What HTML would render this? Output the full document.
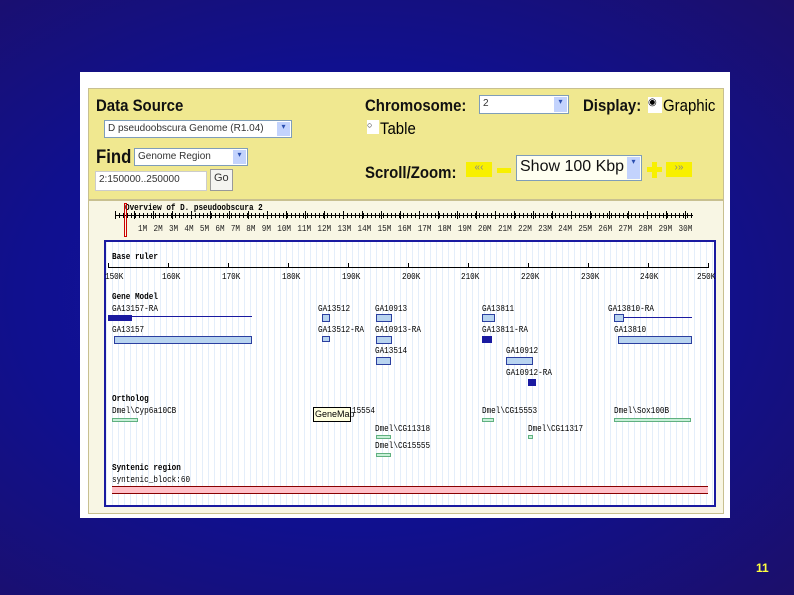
<!DOCTYPE html><html><head><style>
body{margin:0;width:794px;height:595px;overflow:hidden;background:radial-gradient(ellipse at 45% 50%,#1414aa 0%,#10108e 55%,#1c0f6a 100%);font-family:"Liberation Sans",sans-serif;position:relative}
.a{position:absolute}
.m{font-family:"Liberation Mono",monospace;font-size:9px;color:#000;transform:scaleX(.85);transform-origin:left}
.lbl{font-weight:bold;font-size:17px;color:#111;transform:scaleX(.88);transform-origin:left}
.sel{background:#fff;border:1px solid #7f9db9;font-size:10px;color:#333;box-sizing:border-box;padding:2px 3px}
.dd{position:absolute;right:1px;top:1px;bottom:1px;width:13px;background:#c3d3fd;color:#2b4fb0;font-size:8px;text-align:center}
.g{background:#b8d4f0;border:1px solid #2b3fa0;box-sizing:border-box;height:8px}
.o{background:#c8f0d8;border:1px solid #60b080;box-sizing:border-box;height:4px}
</style></head><body>
<div class="a" style="left:80px;top:72px;width:650px;height:446px;background:#fff"></div>
<div class="a" style="left:88px;top:88px;width:634px;height:110px;background:#f0e890;border:1px solid #c8c090"></div>
<div class="a lbl" style="left:96px;top:96px">Data Source</div>
<div class="a sel" style="left:104px;top:120px;width:188px;height:18px">D pseudoobscura Genome (R1.04)<div class="dd">▾</div></div>
<div class="a lbl" style="left:96px;top:147px;font-size:19px">Find</div>
<div class="a sel" style="left:134px;top:148px;width:114px;height:18px">Genome Region<div class="dd">▾</div></div>
<div class="a sel" style="left:95px;top:171px;width:112px;height:20px;border-color:#ccc">2:150000..250000</div>
<div class="a sel" style="left:210px;top:169px;width:23px;height:22px;background:#f4f4f0;border-color:#999;font-size:11px">Go</div>
<div class="a lbl" style="left:365px;top:96px">Chromosome:</div>
<div class="a sel" style="left:479px;top:95px;width:90px;height:19px">2<div class="dd">▾</div></div>
<div class="a lbl" style="left:583px;top:96px">Display:</div>
<div class="a" style="left:648px;top:97px;width:14px;height:16px;background:#fff;font-size:10px">◉</div>
<div class="a" style="left:663px;top:96px;font-size:17px;transform:scaleX(.88);transform-origin:left">Graphic</div>
<div class="a" style="left:367px;top:120px;width:12px;height:14px;background:#fff;font-size:9px">○</div>
<div class="a" style="left:380px;top:119px;font-size:17px;transform:scaleX(.88);transform-origin:left">Table</div>
<div class="a lbl" style="left:365px;top:163px">Scroll/Zoom:</div>
<div class="a" style="left:466px;top:162px;width:26px;height:15px;background:#f8f000;color:#888;font-size:10px;text-align:center">«‹</div>
<div class="a" style="left:497px;top:168px;width:14px;height:5px;background:#f8f000"></div>
<div class="a sel" style="left:516px;top:155px;width:126px;height:26px;font-size:16px;color:#111;background:#fffff0">Show 100 Kbp<div class="dd">▾</div></div>
<div class="a" style="left:647px;top:167px;width:15px;height:5px;background:#f8f000"></div>
<div class="a" style="left:652px;top:162px;width:5px;height:16px;background:#f8f000"></div>
<div class="a" style="left:666px;top:162px;width:26px;height:15px;background:#f8f000;color:#888;font-size:10px;text-align:center">›»</div>
<div class="a" style="left:88px;top:200px;width:634px;height:312px;background:#f8f6e4;border:1px solid #c8c090"></div>
<div class="a m" style="left:125px;top:203px;font-weight:bold">Overview of D. pseudoobscura 2</div>
<div class="a" style="left:115px;top:215px;width:578px;height:1px;background:#000"></div>
<div class="a" style="left:115px;top:213px;width:578px;height:5px;background:repeating-linear-gradient(90deg,#000 0 1px,transparent 1px 4px)"></div>
<div class="a" style="left:115px;top:211px;width:578px;height:8px;background:repeating-linear-gradient(90deg,#000 0 1px,transparent 1px 19px)"></div>
<div class="a" style="left:124px;top:203px;width:3px;height:34px;border:1px solid #c00;box-sizing:border-box"></div>
<div class="a m" style="left:138px;top:224px;word-spacing:2px;color:#222">1M 2M 3M 4M 5M 6M 7M 8M 9M 10M 11M 12M 13M 14M 15M 16M 17M 18M 19M 20M 21M 22M 23M 24M 25M 26M 27M 28M 29M 30M</div>
<div class="a" style="left:104px;top:240px;width:612px;height:267px;border:2px solid #1a1aa0;box-sizing:border-box;background:#fff repeating-linear-gradient(90deg,#e4eefa 0 1px,transparent 1px 6px)"></div>
<div class="a m" style="left:112px;top:252px;font-weight:bold">Base ruler</div>
<div class="a" style="left:108px;top:267px;width:600px;height:1px;background:#000"></div>
<div class="a" style="left:108px;top:263px;width:601px;height:5px;background:repeating-linear-gradient(90deg,#000 0 1px,transparent 1px 60px)"></div>
<div class="a m" style="left:105px;top:272px">150K</div><div class="a m" style="left:162px;top:272px">160K</div><div class="a m" style="left:222px;top:272px">170K</div><div class="a m" style="left:282px;top:272px">180K</div><div class="a m" style="left:342px;top:272px">190K</div><div class="a m" style="left:402px;top:272px">200K</div><div class="a m" style="left:461px;top:272px">210K</div><div class="a m" style="left:521px;top:272px">220K</div><div class="a m" style="left:581px;top:272px">230K</div><div class="a m" style="left:640px;top:272px">240K</div><div class="a m" style="left:697px;top:272px">250K</div>
<div class="a m" style="left:112px;top:292px;font-weight:bold">Gene Model</div>
<div class="a m" style="left:112px;top:304px">GA13157-RA</div>
<div class="a" style="left:108px;top:315px;width:24px;height:6px;background:#1a1aa0"></div>
<div class="a" style="left:128px;top:316px;width:124px;height:1px;background:#1a1aa0"></div>
<div class="a m" style="left:112px;top:325px">GA13157</div>
<div class="a g" style="left:114px;top:336px;width:138px"></div>
<div class="a m" style="left:318px;top:304px">GA13512</div><div class="a g" style="left:322px;top:314px;width:8px"></div>
<div class="a m" style="left:318px;top:325px">GA13512-RA</div><div class="a g" style="left:322px;top:336px;width:8px;height:6px"></div>
<div class="a m" style="left:375px;top:304px">GA10913</div><div class="a g" style="left:376px;top:314px;width:16px"></div>
<div class="a m" style="left:375px;top:325px">GA10913-RA</div><div class="a g" style="left:376px;top:336px;width:16px"></div>
<div class="a m" style="left:375px;top:346px">GA13514</div><div class="a g" style="left:376px;top:357px;width:15px"></div>
<div class="a m" style="left:482px;top:304px">GA13811</div><div class="a g" style="left:482px;top:314px;width:13px"></div>
<div class="a m" style="left:482px;top:325px">GA13811-RA</div><div class="a" style="left:482px;top:336px;width:10px;height:7px;background:#1a1aa0"></div>
<div class="a m" style="left:506px;top:346px">GA10912</div><div class="a g" style="left:506px;top:357px;width:27px"></div>
<div class="a m" style="left:506px;top:368px">GA10912-RA</div><div class="a" style="left:528px;top:379px;width:8px;height:7px;background:#1a1aa0"></div>
<div class="a m" style="left:608px;top:304px">GA13810-RA</div><div class="a g" style="left:614px;top:314px;width:10px"></div><div class="a" style="left:624px;top:317px;width:68px;height:1px;background:#1a1aa0"></div>
<div class="a m" style="left:614px;top:325px">GA13810</div><div class="a g" style="left:618px;top:336px;width:74px"></div>
<div class="a m" style="left:112px;top:394px;font-weight:bold">Ortholog</div>
<div class="a m" style="left:112px;top:406px">Dmel\Cyp6a10CB</div><div class="a o" style="left:112px;top:418px;width:26px"></div>
<div class="a m" style="left:352px;top:406px">15554</div>
<div class="a" style="left:313px;top:407px;width:38px;height:15px;background:#ffffe0;border:1px solid #000;font-size:9px;box-sizing:border-box;padding:1px">GeneMap</div>
<div class="a m" style="left:482px;top:406px">Dmel\CG15553</div><div class="a o" style="left:482px;top:418px;width:12px"></div>
<div class="a m" style="left:614px;top:406px">Dmel\Sox100B</div><div class="a o" style="left:614px;top:418px;width:77px"></div>
<div class="a m" style="left:375px;top:424px">Dmel\CG11318</div><div class="a o" style="left:376px;top:435px;width:15px"></div>
<div class="a m" style="left:528px;top:424px">Dmel\CG11317</div><div class="a o" style="left:528px;top:435px;width:5px"></div>
<div class="a m" style="left:375px;top:441px">Dmel\CG15555</div><div class="a o" style="left:376px;top:453px;width:15px"></div>
<div class="a m" style="left:112px;top:463px;font-weight:bold">Syntenic region</div>
<div class="a m" style="left:112px;top:475px">syntenic_block:60</div>
<div class="a" style="left:112px;top:486px;width:596px;height:8px;background:#ffc0c8;border-top:1px solid #800;border-bottom:1px solid #800;box-sizing:border-box"></div>
<div class="a" style="left:756px;top:561px;font-size:12px;font-weight:bold;color:#ffff40">11</div>
</body></html>
